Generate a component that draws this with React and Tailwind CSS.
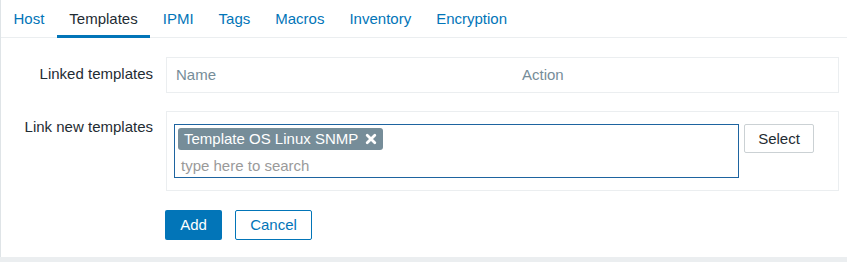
import { useState } from "react";

const tabs = ["Host", "Templates", "IPMI", "Tags", "Macros", "Inventory", "Encryption"];

function Cross() {
  return (
    <svg width="12" height="12" viewBox="0 0 12 12" className="block">
      <path d="M2.2 2.2 L9.8 9.8 M9.8 2.2 L2.2 9.8" stroke="#fff" strokeWidth="2.8" strokeLinecap="round" />
    </svg>
  );
}

export default function App() {
  const [activeTab, setActiveTab] = useState("Templates");

  return (
    <div
      className="min-h-screen bg-[#ebeef0] text-[15px] text-[#1f2c33]"
      style={{ fontFamily: '"Liberation Sans", Arial, sans-serif' }}
    >
      <div className="bg-white border-l border-[#dfe4e7] pb-[17px]">
        {/* Tabs */}
        <nav className="flex border-b border-[#ebeef0]">
          {tabs.map((tab) => (
            <button
              key={tab}
              onClick={() => setActiveTab(tab)}
              className={`h-[38px] px-[12.5px] -mb-px border-b-[3px] leading-4 pt-[2px] ${
                activeTab === tab
                  ? "border-[#0275b8] text-[#1f2c33]"
                  : "border-transparent text-[#0275b8]"
              }`}
            >
              {tab}
            </button>
          ))}
        </nav>

        {/* Form */}
        <div className="pt-[19px] pr-[8px]">
          <div className="flex">
            <div className="w-[152px] text-right pt-[7px] leading-5 shrink-0">Linked templates</div>
            <div className="ml-[13px] flex-1 h-[36px] border border-[#ebeef0] flex items-center px-[9px] text-[#768d99]">
              <div className="w-[346px]">Name</div>
              <div>Action</div>
            </div>
          </div>

          <div className="flex mt-[18px]">
            <div className="w-[152px] text-right pt-[6px] leading-5 shrink-0">Link new templates</div>
            <div className="ml-[13px] flex-1 h-[80px] border border-[#ebeef0] pl-[7px] pt-[12px] flex items-start">
              <div className="w-[565px] h-[54px] border border-[#1e64a0] p-[3px]">
                <div className="inline-flex items-center h-[22px] bg-[#768d99] text-white rounded-[3px] pl-[6px] pr-[6px] gap-[7px] leading-4">
                  <span>Template OS Linux SNMP</span>
                  <Cross />
                </div>
                <div className="pl-[3px] pt-[5px] leading-5 text-[#9a9a9a]">type here to search</div>
              </div>
              <button className="ml-[5px] w-[70px] h-[29px] border border-[#cbd1d4] rounded-[2px] bg-white text-[#1f2c33] pt-[1px]">
                Select
              </button>
            </div>
          </div>

          <div className="flex gap-[13px] mt-[19px] ml-[164px]">
            <button className="h-[30px] w-[57px] bg-[#0275b8] text-white rounded-[2px]">Add</button>
            <button className="h-[30px] w-[77px] border border-[#0275b8] text-[#0275b8] bg-white rounded-[2px]">
              Cancel
            </button>
          </div>
        </div>
      </div>
    </div>
  );
}
